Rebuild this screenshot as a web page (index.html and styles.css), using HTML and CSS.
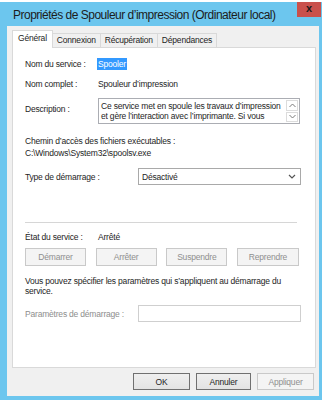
FILE: index.html
```html
<!DOCTYPE html>
<html lang="fr">
<head>
    <meta charset="UTF-8">
    <meta name="viewport" content="width=device-width, initial-scale=1.0">
    <title>Propriétés de Spouleur d'impression</title>
    <link rel="stylesheet" href="styles.css">
</head>
<body>
    <div class="fenetre">
        <div class="barre-titre">
            <span class="titre">Propriétés de Spouleur d’impression (Ordinateur local)</span>
            <span class="fermer">x</span>
        </div>

        <div class="contenu">
            <div class="onglets">
                <span class="onglet actif">Général</span>
                <span class="onglet">Connexion</span>
                <span class="onglet">Récupération</span>
                <span class="onglet">Dépendances</span>
            </div>

            <div class="panneau">
                <div class="ligne l-nom">
                    <span class="etiquette">Nom du service :</span>
                    <span class="selection">Spooler</span>
                </div>
                <div class="ligne l-complet">
                    <span class="etiquette">Nom complet :</span>
                    <span>Spouleur d’impression</span>
                </div>
                <div class="ligne l-desc">
                    <span class="etiquette">Description :</span>
                    <div class="zone-texte">
                        <div class="texte-desc">Ce service met en spoule les travaux d’impression<br>et gère l’interaction avec l’imprimante. Si vous</div>
                        <div class="defilement">
                            <span class="fleche">
                                <svg width="7" height="5" viewBox="0 0 7 5"><path d="M0.5 4 L3.5 1 L6.5 4" fill="none" stroke="#7a7a7a" stroke-width="1"/></svg>
                            </span>
                            <span class="fleche">
                                <svg width="7" height="5" viewBox="0 0 7 5"><path d="M0.5 1 L3.5 4 L6.5 1" fill="none" stroke="#7a7a7a" stroke-width="1"/></svg>
                            </span>
                        </div>
                    </div>
                </div>

                <div class="chemin-titre">Chemin d’accès des fichiers exécutables :</div>
                <div class="chemin">C:\Windows\System32\spoolsv.exe</div>

                <div class="ligne l-type">
                    <span class="etiquette large">Type de démarrage :</span>
                    <div class="liste">
                        <span>Désactivé</span>
                        <svg width="8" height="5" viewBox="0 0 8 5"><path d="M1 1 L4 4 L7 1" fill="none" stroke="#555" stroke-width="1.2"/></svg>
                    </div>
                </div>

                <div class="separateur"></div>

                <div class="ligne l-etat">
                    <span class="etiquette">État du service :</span>
                    <span>Arrêté</span>
                </div>

                <div class="boutons-service">
                    <button disabled>Démarrer</button>
                    <button disabled>Arrêter</button>
                    <button disabled>Suspendre</button>
                    <button disabled class="reprendre">Reprendre</button>
                </div>

                <p class="aide">Vous pouvez spécifier les paramètres qui s’appliquent au démarrage du<br>service.</p>

                <div class="ligne l-param">
                    <span class="etiquette large grise">Paramètres de démarrage :</span>
                    <div class="champ"></div>
                </div>
            </div>

            <div class="actions">
                <button class="principal">OK</button>
                <button class="principal">Annuler</button>
                <button disabled>Appliquer</button>
            </div>
        </div>
    </div>
</body>
</html>
```

FILE: styles.css
```css
body {
  margin: 0;
  background: #ffffff;
  font-family: "Liberation Sans", Arial, sans-serif;
  font-size: 8.5px;
  letter-spacing: -0.2px;
  color: #1e1e1e;
}

.fenetre {
  margin-top: 2px;
  height: 398px;
  background: #6cc6ee;
  padding: 0 3px 4px 7px;
  box-sizing: border-box;
  display: flex;
  flex-direction: column;
}

.barre-titre {
  height: 24px;
  display: flex;
  align-items: flex-start;
  flex-shrink: 0;
}

.titre {
  padding: 6px 0 0 6px;
  font-size: 12px;
  letter-spacing: -0.5px;
  line-height: 14px;
  white-space: nowrap;
  color: #1c1c1c;
}

.fermer {
  margin-left: auto;
  margin-right: -2px;
  width: 24px;
  height: 15px;
  background: #c9504b;
  color: #1a1a1a;
  font-weight: bold;
  font-size: 11px;
  line-height: 13px;
  text-align: center;
}

.contenu {
  flex: 1;
  background: #f0f0f0;
  padding: 5px 3px 6px 5px;
  display: flex;
  flex-direction: column;
}

.onglets {
  display: flex;
  align-items: flex-end;
  height: 17px;
  margin-bottom: -1px;
  padding-left: 1px;
  position: relative;
  z-index: 1;
}

.onglet {
  height: 13px;
  line-height: 12px;
  margin-bottom: 1px;
  padding: 0 4px;
  border: 1px solid #d9d9d9;
  border-bottom: none;
  margin-left: -1px;
  background: #f0f0f0;
}

.onglet.actif {
  height: 17px;
  margin-bottom: 0;
  line-height: 15px;
  padding: 0 5px;
  background: #ffffff;
}

.panneau {
  height: 321px;
  box-sizing: border-box;
  background: #ffffff;
  border: 1px solid #d9d9d9;
  padding: 0 14px 0 12px;
  display: flex;
  flex-direction: column;
}

.ligne {
  display: flex;
  align-items: center;
  line-height: 12px;
}

.etiquette {
  width: 73px;
  flex-shrink: 0;
}

.etiquette.large {
  width: 113px;
}

.grise {
  color: #8d8d8d;
}

.l-nom {
  margin-top: 10px;
}

.selection {
  background: #3399ff;
  color: #ffffff;
  padding: 0 1px;
  margin-left: -1px;
}

.l-complet {
  margin-top: 8px;
}

.l-desc {
  margin-top: 8px;
  align-items: flex-start;
}

.l-desc .etiquette {
  margin-top: 5px;
}

.zone-texte {
  width: 202px;
  height: 26px;
  box-sizing: border-box;
  border: 1px solid #abadb3;
  display: flex;
}

.texte-desc {
  flex: 1;
  padding: 2px 2px;
  line-height: 10px;
  white-space: nowrap;
  overflow: hidden;
}

.defilement {
  width: 12px;
  display: flex;
  flex-direction: column;
  gap: 1px;
  padding: 1px 1px 1px 0;
}

.fleche {
  flex: 1;
  border: 1px solid #dcdcdc;
  display: flex;
  align-items: center;
  justify-content: center;
}

.chemin-titre {
  margin-top: 11px;
  line-height: 12px;
}

.chemin {
  line-height: 12px;
}

.l-type {
  margin-top: 9px;
}

.liste {
  width: 163px;
  height: 17px;
  box-sizing: border-box;
  border: 1px solid #a9a9a9;
  display: flex;
  align-items: center;
  justify-content: space-between;
  padding: 0 4px 0 3px;
}

.separateur {
  margin-top: 37px;
  width: 272px;
  height: 1px;
  background: #d6d6d6;
}

.l-etat {
  margin-top: 8px;
}

.boutons-service {
  margin-top: 5px;
  width: 274px;
  display: flex;
  justify-content: space-between;
}

button {
  font-family: "Liberation Sans", Arial, sans-serif;
  font-size: 8.5px;
  letter-spacing: -0.2px;
  height: 18px;
  padding: 0;
  border: 1px solid #adadad;
  background: linear-gradient(#f0f0f0, #e5e5e5);
  color: #1e1e1e;
}

button:disabled {
  background: #f4f4f4;
  border-color: #c9c9c9;
  color: #8f8f8f;
}

.boutons-service button {
  width: 61px;
}

.boutons-service .reprendre {
  width: 62px;
}

.aide {
  margin: 10px 0 0;
  line-height: 10px;
}

.l-param {
  margin-top: 9px;
}

.champ {
  width: 163px;
  height: 17px;
  box-sizing: border-box;
  border: 1px solid #cfcfcf;
  background: #ffffff;
}

.actions {
  margin-top: 5px;
  display: flex;
  justify-content: flex-end;
  gap: 6px;
  padding-right: 2px;
}

.actions button {
  width: 57px;
  height: 17px;
}

.actions .principal {
  border-color: #707070;
  background: linear-gradient(#efefef, #e3e3e3);
}

.actions .principal + .principal {
  width: 55px;
}
```
